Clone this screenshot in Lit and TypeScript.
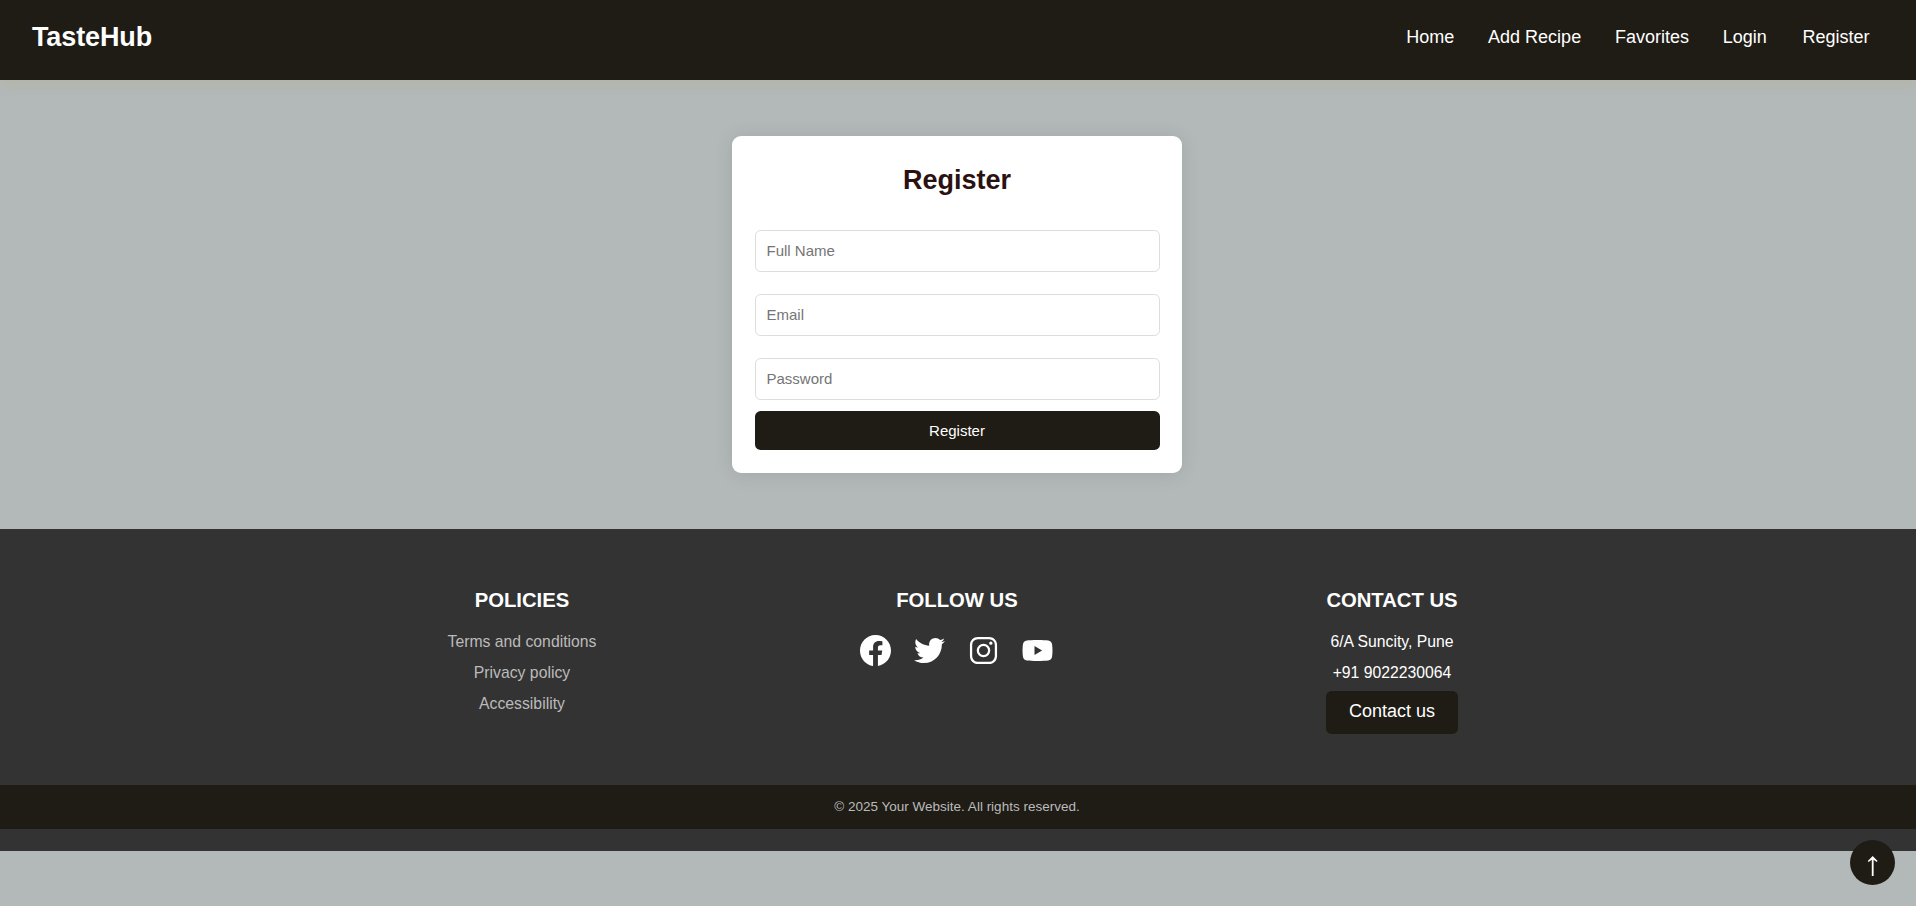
import { LitElement, html, css, svg } from "lit";
import { customElement } from "lit/decorators.js";

const ICONS = [
  ["Facebook", svg`<path d="M16 8.049c0-4.446-3.582-8.05-8-8.05C3.58 0-.002 3.603-.002 8.05c0 4.017 2.926 7.347 6.75 7.951v-5.625h-2.03V8.05H6.75V6.275c0-2.017 1.195-3.131 3.022-3.131.876 0 1.791.157 1.791.157v1.98h-1.009c-.993 0-1.303.621-1.303 1.258v1.51h2.218l-.354 2.326H9.25V16c3.824-.604 6.75-3.934 6.75-7.951"/>`, "0 0 16 16"],
  ["Twitter", svg`<path d="M459.37 151.716c.325 4.548.325 9.097.325 13.645 0 138.72-105.583 298.558-298.558 298.558-59.452 0-114.68-17.219-161.137-47.106 8.447.974 16.568 1.299 25.34 1.299 49.055 0 94.213-16.568 130.274-44.832-46.132-.975-84.792-31.188-98.112-72.772 6.498.974 12.995 1.624 19.818 1.624 9.421 0 18.843-1.3 27.614-3.573-48.081-9.747-84.143-51.98-84.143-102.985v-1.299c13.969 7.797 30.214 12.67 47.431 13.319-28.264-18.843-46.781-51.005-46.781-87.391 0-19.492 5.197-37.36 14.294-52.954 51.655 63.675 129.3 105.258 216.365 109.807-1.624-7.797-2.599-15.918-2.599-24.04 0-57.828 46.782-104.934 104.934-104.934 30.213 0 57.502 12.67 76.67 33.137 23.715-4.548 46.456-13.32 66.599-25.34-7.798 24.366-24.366 44.833-46.132 57.827 21.117-2.273 41.584-8.122 60.426-16.243-14.292 20.791-32.161 39.308-52.628 54.253z"/>`, "0 0 512 512"],
  ["Instagram", svg`<path d="M349.33 69.33a93.62 93.62 0 0 1 93.34 93.34v186.66a93.62 93.62 0 0 1-93.34 93.34H162.67a93.62 93.62 0 0 1-93.34-93.34V162.67a93.62 93.62 0 0 1 93.34-93.34h186.66m0-37.33H162.67C90.8 32 32 90.8 32 162.67v186.66C32 421.2 90.8 480 162.67 480h186.66C421.2 480 480 421.2 480 349.33V162.67C480 90.8 421.2 32 349.33 32z"/><path d="M377.33 162.67a28 28 0 1 1 28-28 27.94 27.94 0 0 1-28 28zM256 181.33A74.67 74.67 0 1 1 181.33 256 74.75 74.75 0 0 1 256 181.33m0-37.33a112 112 0 1 0 112 112 112 112 0 0 0-112-112z"/>`, "0 0 512 512"],
  ["YouTube", svg`<path fill-rule="evenodd" d="M15.5 5C10.500 5 7 5.200 4.800 5.500 2.600 5.800 1.200 7.200.9 9.400.4 13 .4 18 .9 21.600c.3 2.200 1.700 3.600 3.900 3.900 4.400.6 17 .6 21.400 0 2.200-.3 3.600-1.700 3.900-3.900.5-3.600.5-8.600 0-12.200-.3-2.200-1.700-3.600-3.900-3.900C24 5.200 20.500 5 15.500 5zM12.500 11l7.600 4.500-7.600 4.500z"/>`, "0 0 31 31"],
] as const;

@customElement("app-root")
export class AppRoot extends LitElement {
  static styles = css`
    :host { display: block; height: 906px; background: #b3b9b9; font-family: "Liberation Sans", Arial, sans-serif; }
    * { box-sizing: border-box; }
    h2, h3, p { margin: 0; }
    a { color: inherit; text-decoration: none; }
    .bar { height: 80px; padding: 0 46.5px 6px 32px; display: flex; align-items: center; justify-content: space-between; background: #1f1c16; color: #fff; box-shadow: 0 4px 11px rgba(184, 171, 120, .3); }
    .brand { font-size: 27px; font-weight: 700; letter-spacing: -.12px; }
    .links { display: flex; gap: 33.75px; font-size: 18px; }
    .links a:last-child { margin-left: 2px; }
    .main { height: 449px; padding-right: 2px; display: flex; align-items: center; justify-content: center; }
    .card { width: 450px; height: 337px; padding: 22.5px; border-radius: 9px; background: #fff; box-shadow: 0 1px 20px rgba(0, 0, 0, .1); }
    .card h2 { font-size: 27px; line-height: 42px; text-align: center; color: #2b1110; margin-bottom: 29px; }
    .form { display: flex; flex-direction: column; }
    input { height: 42px; margin-bottom: 22px; padding: 0 11px; border: 1px solid #ddd; border-radius: 5.6px; font: 15px "Liberation Sans", Arial, sans-serif; outline: none; }
    input::placeholder { color: #757575; }
    input:last-of-type { margin-bottom: 11px; }
    .submit { height: 39px; border: 0; border-radius: 5.6px; background: #1f1c16; color: #fff; font: 15px "Liberation Sans", Arial, sans-serif; }
    .footer { height: 322px; padding-top: 56px; background: #333; color: #fff; display: flex; flex-direction: column; }
    .cols { height: 200px; width: 1307px; margin: 0 auto; padding-right: 2px; display: grid; grid-template-columns: repeat(3, 1fr); text-align: center; font-size: 15.75px; line-height: 31px; }
    .cols h3 { font-size: 20.25px; line-height: 31px; margin-bottom: 10px; }
    .muted { color: #bbb; }
    .icons { display: flex; justify-content: center; gap: 23px; padding: 9px 2px 0 0; }
    .icons svg { display: block; width: 31px; height: 31px; fill: #fff; }
    .contact { display: inline-block; width: 132px; height: 43px; line-height: 41px; border-radius: 5.6px; background: #1f1c16; font-size: 18px; margin-top: 3px; }
    .legal { height: 44px; line-height: 43px; padding-right: 2px; background: #1f1c16; color: #bbb; text-align: center; font-size: 13.5px; }
    .top { position: fixed; right: 21px; bottom: 21px; width: 45px; height: 45px; padding: 0; border: 0; border-radius: 50%; background: #1f1c16; }
    .top svg { display: block; width: 45px; height: 45px; }
  `;

  render() {
    return html`
      <header class="bar">
        <a class="brand">TasteHub</a>
        <nav class="links">${["Home", "Add Recipe", "Favorites", "Login", "Register"].map((t) => html`<a>${t}</a>`)}</nav>
      </header>
      <main class="main">
        <section class="card">
          <h2>Register</h2>
          <form class="form">
            <input type="text" placeholder="Full Name" />
            <input type="email" placeholder="Email" />
            <input type="password" placeholder="Password" />
            <button class="submit" type="button">Register</button>
          </form>
        </section>
      </main>
      <footer class="footer">
        <div class="cols">
          <div>
            <h3>POLICIES</h3>
            ${["Terms and conditions", "Privacy policy", "Accessibility"].map((t) => html`<p class="muted"><a>${t}</a></p>`)}
          </div>
          <div>
            <h3>FOLLOW US</h3>
            <div class="icons">${ICONS.map(([name, shape, box]) => html`<a aria-label=${name}><svg viewBox=${box}>${shape}</svg></a>`)}</div>
          </div>
          <div>
            <h3>CONTACT US</h3>
            <p>6/A Suncity, Pune</p>
            <p>+91 9022230064</p>
            <a class="contact">Contact us</a>
          </div>
        </div>
        <p class="legal">© 2025 Your Website. All rights reserved.</p>
      </footer>
      <button class="top" type="button" aria-label="Back to top">
        <svg viewBox="0 0 45 45" fill="#fff"><path d="M22.700 16l4.900 5.100-.8.900-3.200-2.300V36h-1.800V19.700l-3.200 2.300-.8-.9z"/></svg>
      </button>
    `;
  }
}
